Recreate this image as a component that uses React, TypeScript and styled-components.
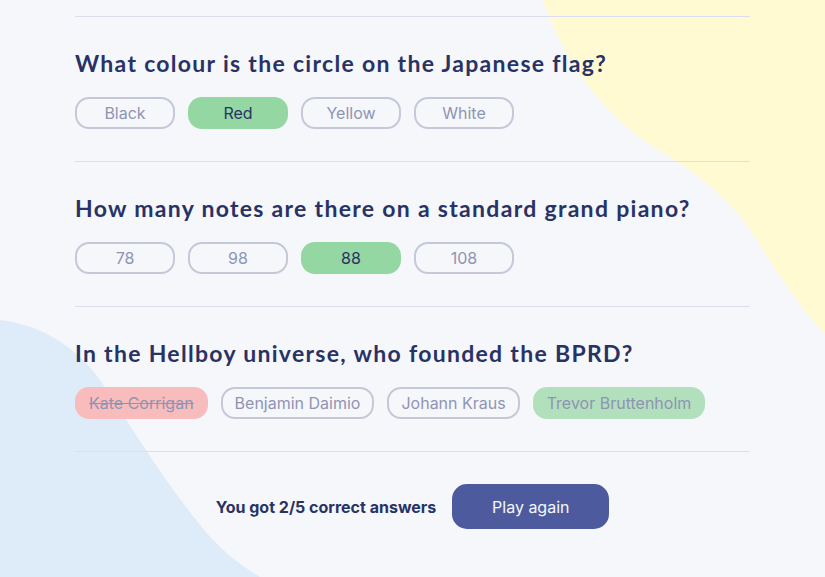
import React from "react";
import styled, { createGlobalStyle, css } from "styled-components";

const GlobalStyle = createGlobalStyle`
  html, body { margin: 0; padding: 0; }
  body {
    background: #f5f7fb;
    font-family: Inter, "Liberation Sans", sans-serif;
    color: #293264;
  }
`;

const Page = styled.div`
  position: relative;
  width: 825px;
  height: 577px;
  overflow: hidden;
  background: #f5f7fb;
`;

const Blob = styled.svg`
  position: absolute;
  inset: 0;
  width: 825px;
  height: 577px;
  z-index: 0;
`;

const Quiz = styled.main`
  position: relative;
  z-index: 1;
  width: 675px;
  margin: 0 auto;
  padding-top: 16px;
`;

const Question = styled.section`
  border-top: 1px solid #dbdef0;
  padding: 33px 0 32px;
  display: flex;
  flex-direction: column;
  gap: 21px;
`;

const Heading = styled.h2`
  margin: 0;
  font-family: Lato, "Liberation Sans", sans-serif;
  font-weight: 700;
  font-size: 23px;
  line-height: 26px;
  letter-spacing: 1.3px;
  color: #293264;
`;

const Options = styled.div`
  display: flex;
  gap: 13px;
`;

type Variant = "idle" | "selected" | "wrong" | "answer";

const Option = styled.button<{ $variant: Variant }>`
  box-sizing: border-box;
  min-width: 100px;
  height: 32px;
  padding: 0 12px;
  border-radius: 14px;
  border: 2px solid transparent;
  font-family: Inter, "Liberation Sans", sans-serif;
  font-size: 16px;
  line-height: 20px;
  background: transparent;
  color: #8f94b3;
  cursor: pointer;
  ${({ $variant }) =>
    $variant === "idle" &&
    css`
      border-color: #c5c8d8;
    `}
  ${({ $variant }) =>
    $variant === "selected" &&
    css`
      background: #94d7a2;
      color: #293264;
    `}
  ${({ $variant }) =>
    $variant === "wrong" &&
    css`
      background: #f8bcbc;
      color: #8f94b3;
      text-decoration: line-through;
    `}
  ${({ $variant }) =>
    $variant === "answer" &&
    css`
      background: #b2e0bc;
      color: #8e93b4;
    `}
`;

const Footer = styled.footer`
  border-top: 1px solid #dbdef0;
  padding-top: 32px;
  display: flex;
  justify-content: center;
  align-items: center;
  gap: 16px;
`;

const Score = styled.p`
  margin: 0;
  font-weight: 700;
  font-size: 16px;
  color: #293264;
`;

const PlayButton = styled.button`
  width: 157px;
  height: 45px;
  border: none;
  border-radius: 15px;
  background: #4d5b9e;
  color: #f5f7fb;
  font-family: Inter, "Liberation Sans", sans-serif;
  font-size: 16px;
  cursor: pointer;
`;

const questions: { q: string; options: { label: string; v: Variant }[] }[] = [
  {
    q: "What colour is the circle on the Japanese flag?",
    options: [
      { label: "Black", v: "idle" },
      { label: "Red", v: "selected" },
      { label: "Yellow", v: "idle" },
      { label: "White", v: "idle" },
    ],
  },
  {
    q: "How many notes are there on a standard grand piano?",
    options: [
      { label: "78", v: "idle" },
      { label: "98", v: "idle" },
      { label: "88", v: "selected" },
      { label: "108", v: "idle" },
    ],
  },
  {
    q: "In the Hellboy universe, who founded the BPRD?",
    options: [
      { label: "Kate Corrigan", v: "wrong" },
      { label: "Benjamin Daimio", v: "idle" },
      { label: "Johann Kraus", v: "idle" },
      { label: "Trevor Bruttenholm", v: "answer" },
    ],
  },
];

export default function App() {
  return (
    <Page>
      <GlobalStyle />
      <Blob viewBox="0 0 825 577" aria-hidden="true">
        <path
          d="M543,0 C558,40 572,68 600,100 C625,130 650,145 680,163 C715,188 740,210 760,245 C785,285 805,312 825,335 L825,0 Z"
          fill="#fffad1"
        />
        <path
          d="M0,320 C40,325 75,345 100,380 C130,425 160,475 200,525 C220,550 240,565 260,577 L0,577 Z"
          fill="#deebf8"
        />
      </Blob>
      <Quiz>
        {questions.map((item) => (
          <Question key={item.q}>
            <Heading>{item.q}</Heading>
            <Options>
              {item.options.map((o) => (
                <Option key={o.label} $variant={o.v}>
                  {o.label}
                </Option>
              ))}
            </Options>
          </Question>
        ))}
        <Footer>
          <Score>You got 2/5 correct answers</Score>
          <PlayButton>Play again</PlayButton>
        </Footer>
      </Quiz>
    </Page>
  );
}
